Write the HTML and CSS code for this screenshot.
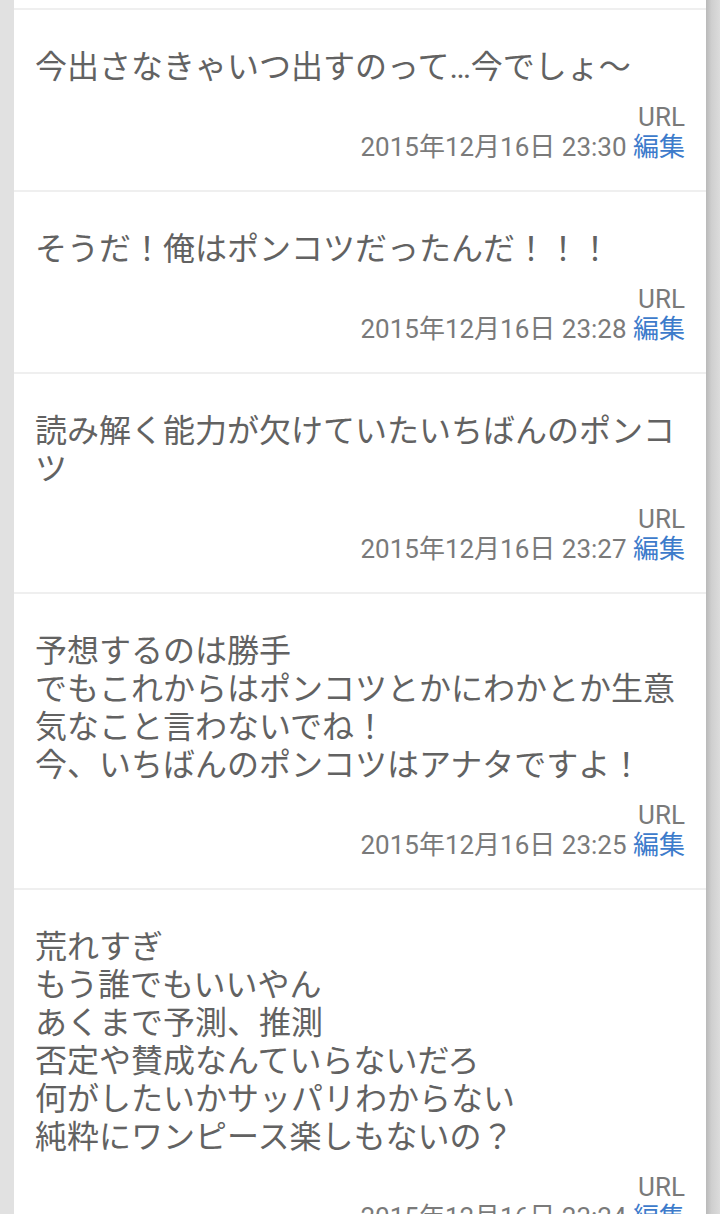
FILE: index.html
```html
<!DOCTYPE html>
<html lang="ja">
<head>
<meta charset="utf-8">
<title>コメント一覧</title>
<link rel="stylesheet" href="styles.css">
</head>
<body>
<div class="page">
  <div class="gutter-left"></div>
  <main class="list">
    <div class="card-tail"></div>
    <article class="card">
      <p class="body">今出さなきゃいつ出すのって…今でしょ～</p>
      <div class="meta">
        <div class="url">URL</div>
        <div class="date">2015年12月16日 23:30 <a class="edit" href="#">編集</a></div>
      </div>
    </article>
    <article class="card">
      <p class="body">そうだ！俺はポンコツだったんだ！！！</p>
      <div class="meta">
        <div class="url">URL</div>
        <div class="date">2015年12月16日 23:28 <a class="edit" href="#">編集</a></div>
      </div>
    </article>
    <article class="card">
      <p class="body">読み解く能力が欠けていたいちばんのポンコツ</p>
      <div class="meta">
        <div class="url">URL</div>
        <div class="date">2015年12月16日 23:27 <a class="edit" href="#">編集</a></div>
      </div>
    </article>
    <article class="card">
      <p class="body">予想するのは勝手<br>でもこれからはポンコツとかにわかとか生意気なこと言わないでね！<br>今、いちばんのポンコツはアナタですよ！</p>
      <div class="meta">
        <div class="url">URL</div>
        <div class="date">2015年12月16日 23:25 <a class="edit" href="#">編集</a></div>
      </div>
    </article>
    <article class="card">
      <p class="body">荒れすぎ<br>もう誰でもいいやん<br>あくまで予測、推測<br>否定や賛成なんていらないだろ<br>何がしたいかサッパリわからない<br>純粋にワンピース楽しもないの？</p>
      <div class="meta">
        <div class="url">URL</div>
        <div class="date">2015年12月16日 23:24 <a class="edit" href="#">編集</a></div>
      </div>
    </article>
  </main>
  <div class="gutter-right"></div>
</div>
</body>
</html>
```

FILE: styles.css
```css
html, body {
  margin: 0;
  padding: 0;
  background: #e0e0e0;
  overflow: hidden;
}

.page {
  display: flex;
  width: 720px;
  min-height: 1214px;
}

.gutter-left {
  width: 14px;
  flex: none;
  background: #e1e1e1;
}

.gutter-right {
  width: 14px;
  flex: none;
  background: linear-gradient(to right, #b9b9b9, #cfcfcf 40%, #dcdcdc);
}

.list {
  width: 692px;
  flex: none;
  background: #ffffff;
  font-family: Roboto, "Noto Sans CJK JP", sans-serif;
}

.card-tail {
  height: 8px;
  background: #ffffff;
}

.card {
  border-top: 2px solid #efefef;
  padding: 38px 21px 28px 21px;
}

.body {
  margin: 0;
  font-size: 32px;
  line-height: 38px;
  color: #626262;
}

.meta {
  margin-top: 16px;
  text-align: right;
  font-size: 26px;
  line-height: 30px;
  color: #7a7a7a;
}

.url,
.date {
  height: 30px;
  white-space: nowrap;
}

.edit {
  color: #3d7bcb;
  text-decoration: none;
}
```
